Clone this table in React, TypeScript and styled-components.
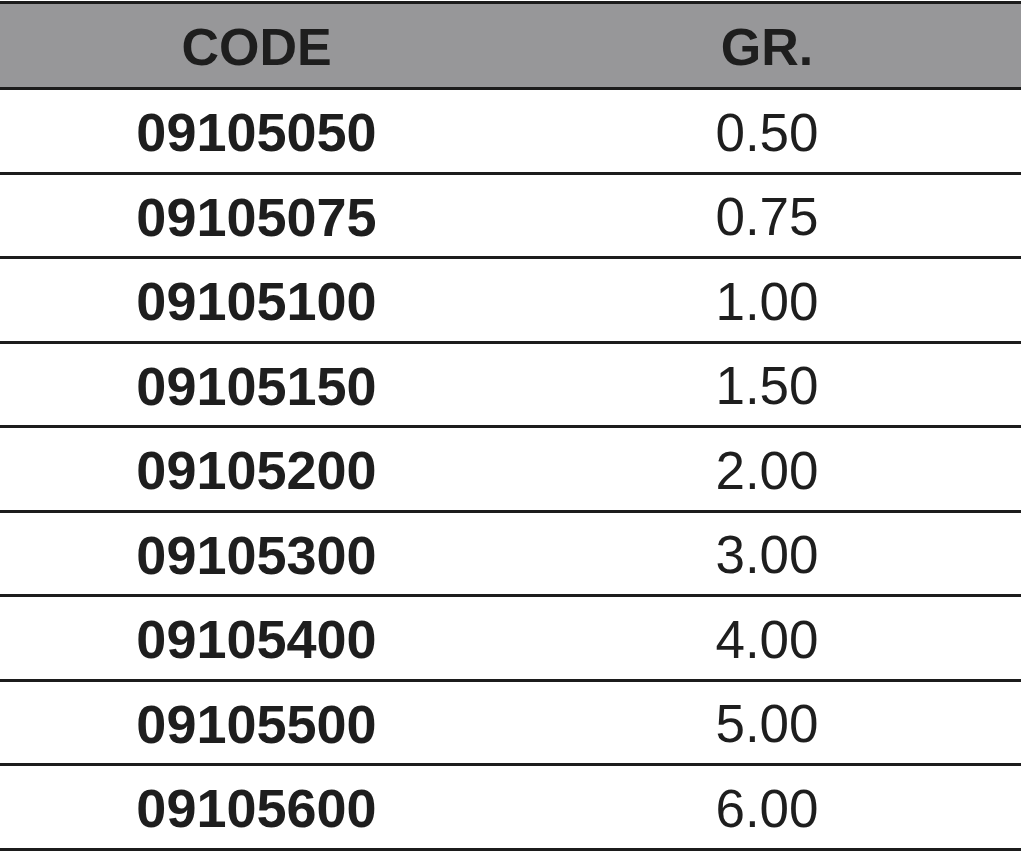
import styled, { createGlobalStyle } from "styled-components";

const GlobalStyle = createGlobalStyle`
  html, body {
    margin: 0;
    padding: 0;
    background: #ffffff;
  }
  body {
    font-family: "Liberation Sans", Arial, Helvetica, sans-serif;
    color: #1e1e1e;
  }
`;

const Page = styled.div`
  width: 1024px;
  height: 853px;
  padding-top: 1px;
  box-sizing: border-box;
  overflow: hidden;
`;

const Table = styled.div`
  width: 1021px;
  border-top: 3px solid #1c1c1c;
`;

const Row = styled.div<{ header?: boolean }>`
  display: grid;
  grid-template-columns: 513px 1fr;
  height: ${(p) => (p.header ? "83px" : "81.5px")};
  background: ${(p) => (p.header ? "#979799" : "#ffffff")};
  border-bottom: 3px solid #1c1c1c;
`;

const Cell = styled.div<{ bold?: boolean; size?: number; shift?: number }>`
  display: flex;
  align-items: center;
  justify-content: center;
  font-size: ${(p) => p.size ?? 53}px;
  font-weight: ${(p) => (p.bold ? 700 : 400)};
  line-height: 1;
  padding-top: ${(p) => p.shift ?? 0}px;
  color: #1e1e1e;
`;

const rows = [
  ["09105050", "0.50"],
  ["09105075", "0.75"],
  ["09105100", "1.00"],
  ["09105150", "1.50"],
  ["09105200", "2.00"],
  ["09105300", "3.00"],
  ["09105400", "4.00"],
  ["09105500", "5.00"],
  ["09105600", "6.00"],
];

export default function App() {
  return (
    <Page>
      <GlobalStyle />
      <Table>
        <Row header>
          <Cell bold size={52} shift={2}>CODE</Cell>
          <Cell bold size={52} shift={2}>GR.</Cell>
        </Row>
        {rows.map(([code, gr]) => (
          <Row key={code}>
            <Cell bold size={54} shift={3}>{code}</Cell>
            <Cell size={53} shift={3}>{gr}</Cell>
          </Row>
        ))}
      </Table>
    </Page>
  );
}
